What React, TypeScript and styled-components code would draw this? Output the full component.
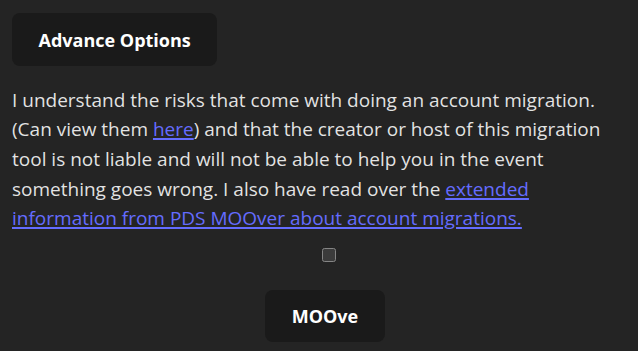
import React from "react";
import styled, { createGlobalStyle } from "styled-components";

const GlobalStyle = createGlobalStyle`
  html, body {
    margin: 0;
    padding: 0;
    background: #242424;
    color-scheme: dark;
  }
  body {
    font-family: "Open Sans", "Noto Sans", sans-serif;
    color: rgba(255, 255, 255, 0.88);
  }
`;

const Page = styled.div`
  width: 638px;
  box-sizing: border-box;
  padding: 13px 0 0 12px;
  display: flex;
  flex-direction: column;
`;

const ActionButton = styled.button<{ $center?: boolean }>`
  align-self: ${(p) => (p.$center ? "center" : "flex-start")};
  height: ${(p) => (p.$center ? 52 : 53)}px;
  padding: 0 ${(p) => (p.$center ? 26.5 : 26.5)}px;
  border: none;
  border-radius: 8px;
  background: #1a1a1a;
  color: #ffffff;
  font-family: "Open Sans", "Noto Sans", sans-serif;
  font-size: 18px;
  font-weight: 700;
  cursor: pointer;
`;

const Notice = styled.p`
  margin: 19.5px 12px 0 0;
  font-size: 19px;
  line-height: 29.7px;
`;

const Link = styled.a`
  color: #646cff;
  font-weight: 500;
  text-decoration: underline;
  text-decoration-thickness: 1.5px;
  text-underline-offset: 2px;
`;

const CheckRow = styled.div`
  display: flex;
  justify-content: center;
  margin-top: 14px;
`;

const Check = styled.input`
  width: 14px;
  height: 14px;
  margin: 0 0 0 8px;
`;

const Bottom = styled.div`
  display: flex;
  justify-content: center;
  margin-top: 28px;
`;

export default function App() {
  return (
    <>
      <GlobalStyle />
      <Page>
        <ActionButton>Advance Options</ActionButton>
        <Notice>
          I understand the risks that come with doing an account migration. (Can view them{" "}
          <Link href="#">here</Link>) and that the creator or host of this migration tool is not
          liable and will not be able to help you in the event something goes wrong. I also have
          read over the{" "}
          <Link href="#">extended information from PDS MOOver about account migrations.</Link>
        </Notice>
        <CheckRow>
          <Check type="checkbox" />
        </CheckRow>
        <Bottom>
          <ActionButton $center>MOOve</ActionButton>
        </Bottom>
      </Page>
    </>
  );
}
